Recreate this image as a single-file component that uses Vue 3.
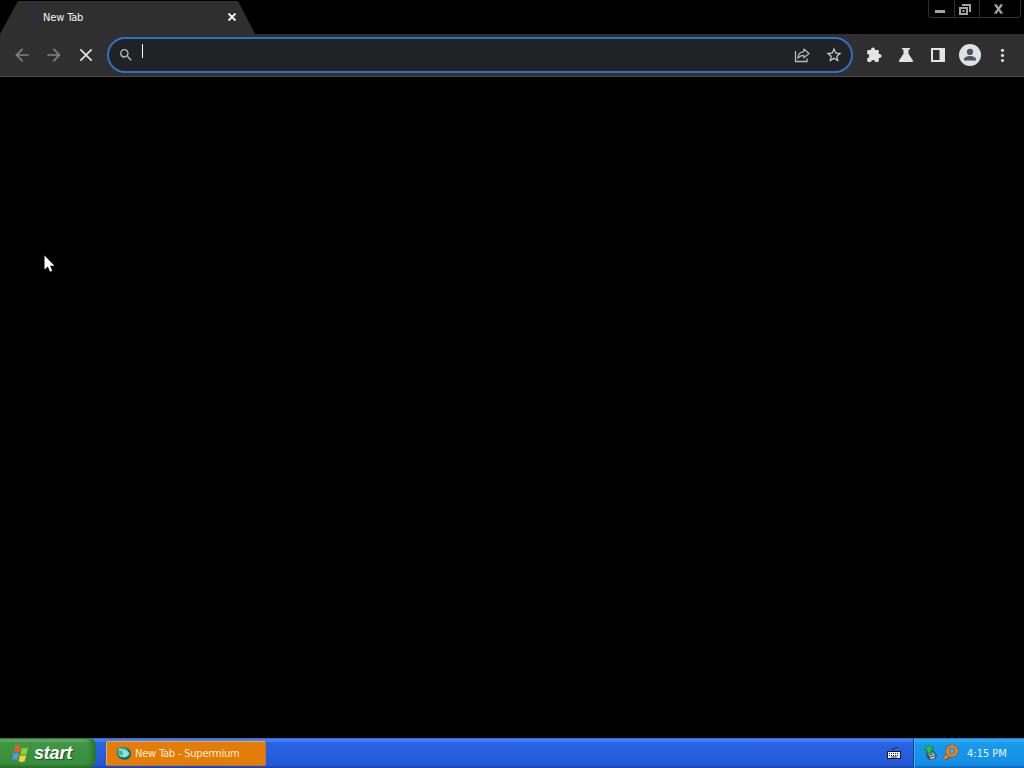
<!-- Browser window on the desktop -->
<template>
  <div class="screen">
    <header class="tabstrip">
      <div class="tab">
        <svg class="spinner" width="14" height="14" viewBox="0 0 14 14">
          <path d="M5 1.500c8 0 9 9 2.500 11.500" fill="none" stroke="#28304a" stroke-width="2.200" />
        </svg>
        <span class="tab-title">{{ title }}</span>
        <svg class="tab-close" width="10" height="10" viewBox="0 0 10 10">
          <path d="M1.500 1.500l7 7M8.500 1.500l-7 7" stroke="#f1f1f1" stroke-width="1.900" />
        </svg>
      </div>
      <div class="controls">
        <button class="ctl">
          <svg width="24" height="16"><path d="M6 9h10v3H6z" fill="#a3a3a3" /></svg>
        </button>
        <button class="ctl">
          <svg width="24" height="16">
            <path d="M7 3h9v8h-2V5H7z" fill="#a3a3a3" />
            <path d="M4 6h9v8H4zM6 8v4h5V8z" fill="#a3a3a3" fill-rule="evenodd" />
            <path d="M7.500 9h2v2h-2z" fill="#a3a3a3" />
          </svg>
        </button>
        <button class="ctl wide">
          <svg width="40" height="16">
            <path d="M15.500 4l6 8M21.500 4l-6 8" stroke="#a3a3a3" stroke-width="2.200" />
            <path d="M14 4h3.200M19.800 4H23M14 12h3.200M19.800 12H23" stroke="#a3a3a3" />
          </svg>
        </button>
      </div>
    </header>

    <nav class="toolbar">
      <button v-for="b in navButtons" :key="b.name" class="nav-btn" :class="{ off: b.off }">
        <svg width="20" height="20" viewBox="0 0 24 24"><path :d="b.d" fill="currentColor" /></svg>
      </button>
      <div class="omnibox">
        <svg class="search" width="16" height="16" viewBox="0 0 24 24"><path :d="searchPath" fill="#b9bbbe" /></svg>
        <span class="caret"></span>
        <svg class="share" width="18" height="18" viewBox="0 0 18 18">
          <path d="M2.500 5v10.500h11.500V12.500" fill="none" stroke="#b5b7ba" stroke-width="1.300" />
          <path d="M4.800 12.200c.3-4 2.600-6.300 6-6.600V3l5.200 4.500-5.200 4.300V9.300c-2.600 0-4.300.8-6 2.900z" fill="none" stroke="#b5b7ba" stroke-width="1.200" stroke-linejoin="round" />
        </svg>
        <svg width="18" height="18" viewBox="0 0 24 24"><path :d="starPath" fill="#d0d1d3" /></svg>
      </div>
      <div class="actions">
        <svg width="18" height="18" viewBox="0 0 18 18">
          <path :d="puzzlePath" fill="#e4e4e4" />
        </svg>
        <svg width="18" height="18" viewBox="0 0 18 18">
          <path d="M5 2h8v1.500h-1.500v4.200l4.300 6.600c.5.800.1 1.700-.8 1.700H3c-.9 0-1.300-.9-.8-1.700l4.300-6.600V3.500H5z" fill="#e4e4e4" />
        </svg>
        <svg width="18" height="18" viewBox="0 0 18 18">
          <path d="M2 2h14v14H2zM4 4v10h6.500V4z" fill="#e4e4e4" fill-rule="evenodd" />
        </svg>
        <svg class="avatar" width="22" height="22" viewBox="0 0 22 22">
          <circle cx="11" cy="11" r="11" fill="#dee1e6" />
          <circle cx="11" cy="7.900" r="3.100" fill="#4d535c" />
          <path d="M5 16.500v-1.200c0-2.200 3.800-3.200 6-3.200s6 1 6 3.200v1.200z" fill="#4d535c" />
        </svg>
        <svg width="18" height="18" viewBox="0 0 18 18" fill="#dedede">
          <circle cx="9.500" cy="4.300" r="1.600" /><circle cx="9.500" cy="9.400" r="1.600" /><circle cx="9.500" cy="14.500" r="1.600" />
        </svg>
      </div>
    </nav>

    <main class="page"></main>

    <footer class="taskbar">
      <button class="start">
        <svg width="19" height="19" viewBox="0 0 19 19">
          <path d="M4.200 2c2-1.300 3.700-1.200 5.300 0L8.300 8.500c-1.800-1-3.500-1-5.300 0z" fill="#ee5a26" />
          <path d="M10.600 3.500c1.800 1 3.800 1 6.400-.200l-1.500 6.700c-2.200 1-4.200 1-6 0z" fill="#8bcf3e" />
          <path d="M2.300 9.700c2-1 3.700-1 5.500 0L6.400 16c-1.700-1-3.500-1-5.400 0z" fill="#5493f5" />
          <path d="M9 11c2 1 4 1 6.200 0l-1.500 6.300c-2.200 1-4.200 1-6.100 0z" fill="#fbd12e" />
        </svg>
        <span>start</span>
      </button>
      <button class="task">
        <svg width="16" height="16" viewBox="0 0 16 16">
          <path d="M1.500 3C5-1 15 1 15 7.500S8 15 4 12.500C1 11 0 6 1.500 3z" fill="#126e70" />
          <path d="M2 2.500c4-2 9-1 10.500 3.500-1 4-4.500 6.500-8 5C1 9.500 1 5 2 2.500z" fill="#38b5aa" />
          <path d="M5 4c4-1 6.500 0 8.500 3.500C12 11 9 12 5.500 10.500c2-2 2-4.500-.5-6.500z" fill="#86e5d5" />
          <path d="M3 3.500l3 .5M3.500 9.500l2 .5" stroke="#d5fff5" />
        </svg>
        <span>{{ title }} - Supermium</span>
      </button>
      <svg class="keyboard" width="14" height="14" viewBox="0 0 14 14">
        <path d="M4.500 4c0-2 2 0 3-1.500s2 .500 3-1.500" fill="none" stroke="#14204a" />
        <path d="M0 5h14v8H0z" fill="#10172a" />
        <path d="M1 6h12v6H1z" fill="#f2f2ee" />
        <path d="M2 7.500h10M2 9.500h10" stroke="#20263a" stroke-dasharray="1 1" />
        <path d="M4 11h6" stroke="#20263a" />
      </svg>
      <div class="tray">
        <svg width="16" height="16" viewBox="0 0 16 16">
          <path d="M3.500 7l7-1.500L14 10l-1 3.500-7 1.500-2.500-3z" fill="#40535d" />
          <path d="M5 8.500l5-1.200 2.500 3-5.500 1.500z" fill="#a9bcc0" />
          <path d="M7 12.800l5-1.200v1.200L7.500 14z" fill="#e3eceb" />
          <path d="M7 9.500l3-.7" stroke="#28434d" />
          <path d="M1 4.500L5.500.500 11 3 8.500 4 8 8 4.500 8.500 4 5z" fill="#2fc04a" stroke="#16743c" stroke-width=".7" />
        </svg>
        <svg width="17" height="16" viewBox="0 0 17 16">
          <path d="M7 9.500l-4.500 4.500" stroke="#8d4e1c" stroke-width="4.400" />
          <path d="M7 9.500l-4.500 4" stroke="#f08b25" stroke-width="2.800" />
          <circle cx="10" cy="6" r="4.600" fill="#4aa6dc" stroke="#8d4e1c" stroke-width="3.800" />
          <circle cx="10" cy="6" r="4.600" fill="none" stroke="#f28c22" stroke-width="2.400" />
        </svg>
        <span class="clock">4:15 PM</span>
      </div>
    </footer>

    <!-- mouse pointer -->
    <svg class="pointer" width="12" height="19" viewBox="0 0 12 19">
      <path d="M.500.500v14l3.300-3 2.300 5.300 2.200-1-2.300-5h4.400z" fill="#fff" />
    </svg>
  </div>
</template>

<script setup>
import { ref } from "vue";

const title = ref("New Tab");

const navButtons = [
  { name: "back", off: true, d: "M20 11H7.830l5.590-5.590L12 4l-8 8 8 8 1.410-1.410L7.830 13H20v-2z" },
  { name: "forward", off: true, d: "M12 4l-1.410 1.410L16.170 11H4v2h12.170l-5.580 5.590L12 20l8-8z" },
  { name: "stop", off: false, d: "M19.500 5.910L18.090 4.500 12 10.590 5.910 4.500 4.500 5.910 10.590 12 4.500 18.090l1.410 1.410L12 13.410l6.090 6.090 1.410-1.410L13.410 12z" },
];

const searchPath = "M15.500 14h-.790l-.280-.270A6.470 6.470 0 0 0 16 9.500 6.500 6.500 0 1 0 9.500 16c1.610 0 3.090-.590 4.230-1.570l.270.280v.790l5 4.990L20.490 19l-4.990-5zm-6 0C7.010 14 5 11.990 5 9.500S7.010 5 9.500 5 14 7.010 14 9.500 11.990 14 9.500 14z";
const starPath = "M22 9.240l-7.190-.620L12 2 9.190 8.630 2 9.240l5.460 4.730L5.820 21 12 17.270 18.180 21l-1.630-7.030L22 9.240zM12 15.400l-3.760 2.270 1-4.280-3.320-2.880 4.380-.380L12 6.100l1.710 4.040 4.380.380-3.320 2.880 1 4.280L12 15.400z";
const puzzlePath = "M14.500 8H13.800V5.200c0-.7-.5-1.200-1.200-1.200H10V3.600a2 2 0 0 0-4 0V4H3.400c-.7 0-1.200.5-1.200 1.200V8a2.100 2.100 0 0 1 0 4.200v2.600c0 .7.500 1.200 1.200 1.200H6a2.100 2.100 0 0 1 4.200 0h2.400c.7 0 1.200-.5 1.200-1.200V12h.7a2 2 0 0 0 0-4z";
</script>

<style>
body {
  background: #000;
  overflow: hidden;
}
</style>

<style scoped>
.screen {
  width: 1024px;
  height: 768px;
  display: flex;
  flex-direction: column;
  position: relative;
  background: #000;
  font-family: "DejaVu Sans Condensed", "Noto Sans", sans-serif;
  font-size: 11px;
}
button {
  border: 0;
  padding: 0;
  margin: 0;
  background: none;
  font-family: inherit;
  font-size: inherit;
}
svg {
  display: block;
  flex: none;
}

/* tabs */
.tabstrip {
  height: 34px;
  display: flex;
  align-items: flex-start;
  justify-content: space-between;
}
.tab {
  width: 255px;
  height: 33px;
  margin-top: 1px;
  box-sizing: border-box;
  padding: 0 18px 1px 23px;
  display: flex;
  align-items: center;
  background: #2f2f2f;
  clip-path: polygon(18px 0, 238px 0, 255px 100%, 0 100%);
}
.tab-title {
  margin-left: 6px;
  color: #f4f4f4;
  letter-spacing: -0.15px;
  white-space: nowrap;
}
.tab-close {
  margin-left: auto;
}
.controls {
  display: flex;
  margin-right: 3px;
  border: 1px solid #303030;
  border-top: 0;
  border-radius: 0 0 4px 4px;
}
.ctl {
  height: 17px;
  width: 25px;
}
.ctl + .ctl {
  border-left: 1px solid #303030;
}
.ctl.wide {
  width: 41px;
}

/* toolbar */
.toolbar {
  height: 43px;
  box-sizing: border-box;
  border-bottom: 1px solid #4c4c4c;
  background: #2f2f2f;
  display: flex;
  align-items: center;
  padding-left: 6px;
}
.nav-btn {
  width: 32px;
  height: 32px;
  display: flex;
  align-items: center;
  justify-content: center;
  color: #e3e3e3;
}
.nav-btn.off {
  color: #828282;
}
.omnibox {
  width: 746px;
  height: 36px;
  margin-left: 5px;
  box-sizing: border-box;
  border: 2px solid #2f6fc5;
  border-radius: 18px;
  background: #202226;
  display: flex;
  align-items: center;
  padding: 0 8px 0 9px;
}
.caret {
  width: 1px;
  height: 14px;
  margin: -8px auto 0 8px;
  background: #fff;
}
.share {
  margin-right: 14px;
}
.actions {
  display: flex;
  align-items: center;
  gap: 14px;
  margin-left: 12px;
}
.avatar {
  margin: 0 -2px;
}
.page {
  flex: 1;
}

/* taskbar */
.taskbar {
  height: 30px;
  display: flex;
  align-items: center;
  background: linear-gradient(#2f60cc 0, #4b8bf5 2px, #2863e3 5px, #245bdb 22px, #2258d5 27px, #1941a5 30px);
}
.start {
  width: 96px;
  height: 30px;
  box-sizing: border-box;
  padding-left: 11px;
  display: flex;
  align-items: center;
  gap: 4px;
  border-radius: 0 8px 8px 0;
  background: linear-gradient(#35733a 0, #73b875 2px, #3f9645 5px, #388e3d 22px, #37913c 26px, #27652c 30px);
  box-shadow: inset -4px 0 4px #2a732e;
  color: #fff;
  font: italic bold 18px "Liberation Sans", sans-serif;
  letter-spacing: -0.2px;
  text-shadow: 1px 1px 1px #244f28;
}
.task {
  width: 160px;
  height: 25px;
  margin-left: 10px;
  margin-top: 1px;
  box-sizing: border-box;
  padding-left: 9px;
  display: flex;
  align-items: center;
  gap: 3px;
  border: 1px solid #c87520;
  border-top-color: #f5a54a;
  border-left-color: #efaa62;
  border-radius: 2px;
  background: #e47c0a;
  color: #fff0d5;
  letter-spacing: -0.2px;
  white-space: nowrap;
}
.keyboard {
  margin-left: auto;
  margin-right: 12px;
}
.tray {
  width: 111px;
  height: 30px;
  box-sizing: border-box;
  padding-left: 9px;
  display: flex;
  align-items: center;
  gap: 3px;
  border-left: 1px solid #11408e;
  box-shadow: inset 1px 0 #38b4f5;
  background: linear-gradient(#1a72c2 0, #3cb0f5 2px, #179bec 5px, #1591e7 22px, #138ae0 27px, #0d62b2 30px);
}
.clock {
  margin-left: 5px;
  color: #e9f7ff;
  letter-spacing: 0;
  white-space: nowrap;
}

.pointer {
  position: absolute;
  left: 44px;
  top: 255px;
}
</style>
